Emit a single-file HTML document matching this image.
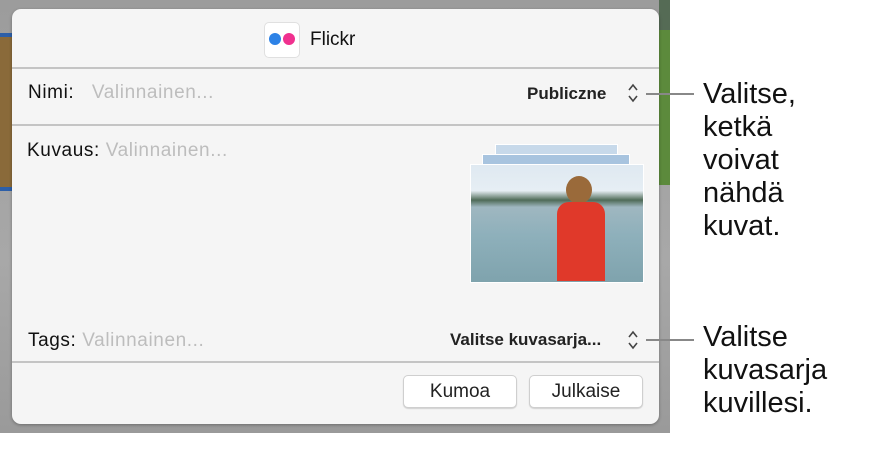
<!DOCTYPE html>
<html><head><style>
body{margin:0;width:870px;height:468px;background:#fff;position:relative;overflow:hidden;font-family:"Liberation Sans",sans-serif}
.bg{position:absolute;left:0;top:0;width:670px;height:433px;background:linear-gradient(#9c9c9c,#a8a8a8 60%,#9a9a9a)}
.dlg{position:absolute;left:12px;top:9px;width:647px;height:415px;background:#f5f5f5;border-radius:9px;box-shadow:0 1px 3px rgba(0,0,0,.3)}
.a{position:absolute;white-space:nowrap}
.hr{position:absolute;left:0;width:647px;height:2px;background:#c4c4c4}
.ph{color:#bdbdbd}
.lbl{font-size:19px;letter-spacing:.6px;color:#111}
.btn{position:absolute;top:366px;height:31px;background:#fff;border:1px solid #cfcfcf;border-radius:5px;box-shadow:0 1px 1px rgba(0,0,0,.15);font-size:19px;text-align:center;line-height:31px;color:#222}
.co{position:absolute;left:703px;font-size:29px;line-height:33px;color:#111}
.ln{position:absolute;height:2px;background:#888;width:48px;left:646px}
</style></head><body>
<div class="bg"></div>
<div class="a" style="left:0;top:33px;width:12px;height:150px;background:#8a6a3a;border-top:4px solid #2d5fa8;border-bottom:4px solid #2d5fa8"></div>
<div class="a" style="left:659px;top:0;width:11px;height:30px;background:#556b55"></div>
<div class="a" style="left:659px;top:30px;width:11px;height:155px;background:#5c8a3c"></div>
<div class="dlg">
 <div class="a" style="left:252px;top:13px;width:34px;height:34px;background:#fff;border:1px solid #e0e0e0;border-radius:5px"></div>
 <div class="a" style="left:257px;top:24px;width:12px;height:12px;border-radius:50%;background:#2d82e6"></div>
 <div class="a" style="left:271px;top:24px;width:12px;height:12px;border-radius:50%;background:#f0318f"></div>
 <div class="a" style="left:298px;top:20px;font-size:19px;color:#111">Flickr</div>
 <div class="hr" style="top:58px"></div>
 <div class="a lbl" style="left:16px;top:73px">Nimi:&nbsp;&nbsp; <span class="ph">Valinnainen...</span></div>
 <div class="a" style="left:515px;top:75px;font-size:17px;font-weight:bold;color:#222">Publiczne</div>
 <svg class="a" style="left:615px;top:74px" width="12" height="20" viewBox="0 0 12 20"><path d="M2 7 L6 2 L10 7 M2 13 L6 18 L10 13" fill="none" stroke="#444" stroke-width="1.6"/></svg>
 <div class="hr" style="top:115px"></div>
 <div class="a lbl" style="left:15px;top:131px">Kuvaus: <span class="ph">Valinnainen...</span></div>
 <div class="a" style="left:483px;top:135px;width:121px;height:12px;background:#c7d9ea;border:1px solid #fff"></div>
 <div class="a" style="left:470px;top:145px;width:146px;height:10px;background:#a8c4df;border:1px solid #fff"></div>
 <div class="a" style="left:458px;top:155px;width:172px;height:117px;border:1px solid #fff;background:linear-gradient(#dfe9f1 0%,#e6eef4 22%,#4f6b58 30%,#9fb7c0 36%,#8eb0bb 60%,#7fa3ad 100%)"></div>
 <div class="a" style="left:554px;top:167px;width:26px;height:28px;border-radius:50%;background:#9a6a3a"></div>
 <div class="a" style="left:545px;top:193px;width:48px;height:79px;background:#e0392a;border-radius:12px 12px 0 0"></div>
 <div class="a lbl" style="left:16px;top:321px">Tags: <span class="ph">Valinnainen...</span></div>
 <div class="a" style="left:438px;top:321px;font-size:17px;font-weight:bold;color:#222">Valitse kuvasarja...</div>
 <svg class="a" style="left:615px;top:321px" width="12" height="20" viewBox="0 0 12 20"><path d="M2 7 L6 2 L10 7 M2 13 L6 18 L10 13" fill="none" stroke="#444" stroke-width="1.6"/></svg>
 <div class="hr" style="top:352px"></div>
 <div class="btn" style="left:391px;width:112px">Kumoa</div>
 <div class="btn" style="left:517px;width:112px">Julkaise</div>
</div>
<div class="ln" style="top:93px"></div>
<div class="ln" style="top:339px"></div>
<div class="co" style="top:78px">Valitse,<br>ketkä<br>voivat<br>nähdä<br>kuvat.</div>
<div class="co" style="top:321px">Valitse<br>kuvasarja<br>kuvillesi.</div>
</body></html>
